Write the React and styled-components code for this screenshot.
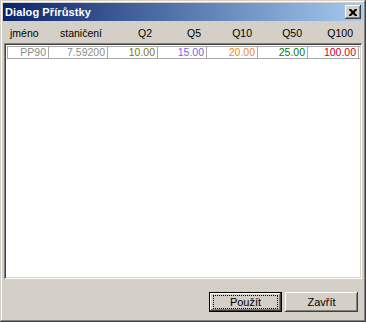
import React from "react";
import styled, { createGlobalStyle } from "styled-components";

const GlobalStyle = createGlobalStyle`
  html, body {
    margin: 0;
    padding: 0;
    background: #d4d0c8;
  }
  * {
    box-sizing: border-box;
  }
`;

const columns = [
  { key: "name", label: "jméno", width: 41, color: "#8c8c8c", left: true },
  { key: "station", label: "staničení", width: 59, color: "#8c8c8c" },
  { key: "q2", label: "Q2", width: 50, color: "#857600" },
  { key: "q5", label: "Q5", width: 49, color: "#7466e6" },
  { key: "q10", label: "Q10", width: 51, color: "#f08c14" },
  { key: "q50", label: "Q50", width: 50, color: "#067a06" },
  { key: "q100", label: "Q100", width: 51, color: "#d0001c" },
];

const rows = [
  {
    name: "PP90",
    station: "7.59200",
    q2: "10.00",
    q5: "15.00",
    q10: "20.00",
    q50: "25.00",
    q100: "100.00",
  },
];

const gridTemplate = columns.map((c) => `${c.width}px`).join(" ");

const App = () => {
  return (
    <>
      <GlobalStyle />
      <Window>
        <TitleBar>
          <Title>Dialog Přírůstky</Title>
          <CloseButton>
            <svg width="8" height="7" viewBox="0 0 8 7">
              <path
                d="M0 0h2l2 2 2-2h2v1L5.5 3.5 8 6v1H6L4 5 2 7H0V6l2.5-2.5L0 1z"
                fill="#000"
              />
            </svg>
          </CloseButton>
        </TitleBar>
        <Body>
          <HeaderRow>
            {columns.map((c) => (
              <HeaderCell key={c.key} $left={c.left}>
                {c.label}
              </HeaderCell>
            ))}
          </HeaderRow>
          <GridPanel>
            {rows.map((r, i) => (
              <DataRow key={i}>
                {columns.map((c) => (
                  <DataCell key={c.key} $color={c.color}>
                    {r[c.key]}
                  </DataCell>
                ))}
              </DataRow>
            ))}
          </GridPanel>
          <Footer>
            <Button $default>
              <FocusRing>Použít</FocusRing>
            </Button>
            <Button>Zavřít</Button>
          </Footer>
        </Body>
      </Window>
    </>
  );
};

export default App;

const Window = styled.div`
  width: 366px;
  height: 322px;
  padding: 3px;
  display: flex;
  flex-direction: column;
  background: #d4d0c8;
  box-shadow: inset -1px -1px #404040, inset 1px 1px #d4d0c8,
    inset -2px -2px #808080, inset 2px 2px #ffffff;
  font-family: "Liberation Sans", Arial, sans-serif;
`;

const TitleBar = styled.div`
  height: 18px;
  display: flex;
  align-items: center;
  justify-content: space-between;
  padding: 0 2px 0 2px;
  background: linear-gradient(to right, #0a246a, #a6caf0);
`;

const Title = styled.span`
  color: #fff;
  font-weight: bold;
  font-size: 11px;
  letter-spacing: 0.1px;
`;

const CloseButton = styled.div`
  width: 16px;
  height: 14px;
  display: flex;
  align-items: center;
  justify-content: center;
  background: #d4d0c8;
  box-shadow: inset -1px -1px #404040, inset 1px 1px #ffffff,
    inset -2px -2px #808080;
`;

const Body = styled.div`
  flex: 1;
  display: flex;
  flex-direction: column;
  padding: 0 1px 0 1px;
`;

const HeaderRow = styled.div`
  height: 22px;
  display: grid;
  grid-template-columns: ${gridTemplate};
  align-items: center;
  padding: 1px 0 0 3px;
  font-size: 10.5px;
  color: #000;
`;

const HeaderCell = styled.div`
  text-align: ${(p) => (p.$left ? "left" : "right")};
  padding: ${(p) => (p.$left ? "0 0 0 3px" : "0 5px 0 0")};
`;

const GridPanel = styled.div`
  height: 236px;
  background: #fff;
  padding: 3px 0 0 1px;
  box-shadow: inset 1px 1px #808080, inset -1px -1px #ffffff,
    inset 2px 2px #404040, inset -2px -2px #d4d0c8;
  padding: 3px 2px 2px 3px;
`;

const DataRow = styled.div`
  display: grid;
  grid-template-columns: ${gridTemplate};
  height: 13px;
  border-top: 1px solid #a8a8a8;
  border-bottom: 1px solid #a8a8a8;
  border-left: 1px solid #a8a8a8;
`;

const DataCell = styled.div`
  border-right: 1px solid #a8a8a8;
  text-align: right;
  padding-right: 2px;
  font-size: 10.5px;
  line-height: 11px;
  color: ${(p) => p.$color};
`;

const Footer = styled.div`
  flex: 1;
  display: flex;
  justify-content: flex-end;
  align-items: flex-start;
  gap: 3px;
  padding: 13px 4px 0 0;
`;

const Button = styled.div`
  width: 73px;
  height: 20px;
  display: flex;
  align-items: center;
  justify-content: center;
  font-size: 11px;
  color: #000;
  background: #d4d0c8;
  box-shadow: ${(p) =>
    p.$default
      ? "inset 0 0 0 1px #000, inset -2px -2px #404040, inset 2px 2px #ffffff, inset -3px -3px #808080"
      : "inset -1px -1px #404040, inset 1px 1px #ffffff, inset -2px -2px #808080"};
`;

const FocusRing = styled.span`
  width: 65px;
  height: 14px;
  display: flex;
  align-items: center;
  justify-content: center;
  border: 1px dotted #000;
`;
